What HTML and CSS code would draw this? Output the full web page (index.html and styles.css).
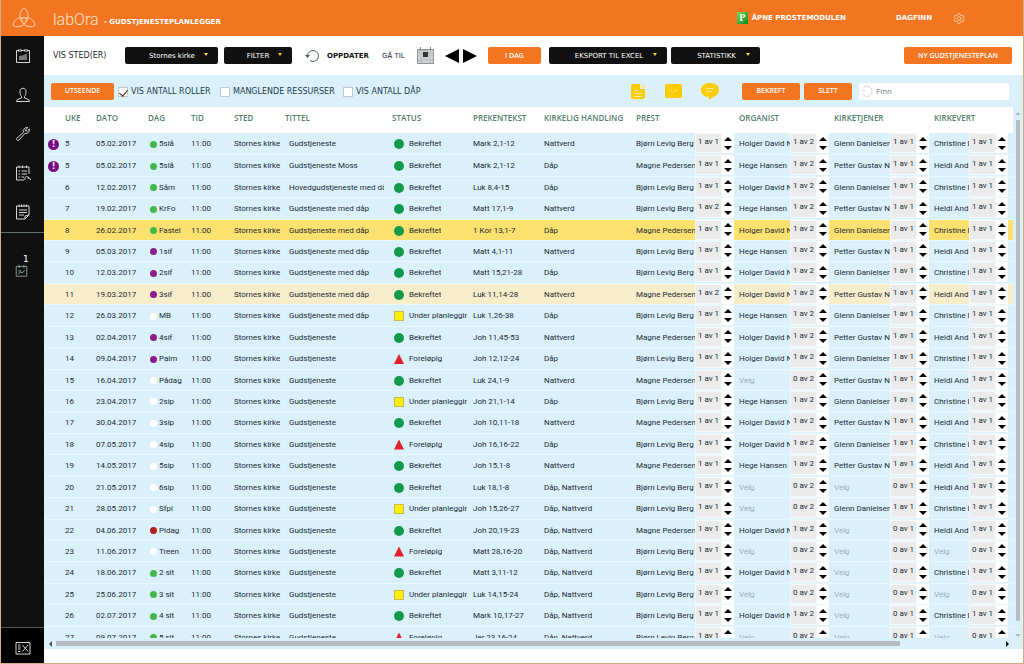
FILE: index.html
```html
<!DOCTYPE html>
<html lang="no">
<head>
<meta charset="utf-8">
<title>labOra - Gudstjenesteplanlegger</title>
<link rel="stylesheet" href="styles.css">
</head>
<body>
<div class="app">
  <header class="topbar">
    <svg class="logo" viewBox="0 0 24 24" aria-hidden="true"><path d="M12 2C6.500 6 6.500 14 12 18C17.500 14 17.500 6 12 2ZM1 19.500C1.500 13 8 9.500 14.500 12.500C14 19 7.500 23 1 19.500ZM23 19.500C22.500 13 16 9.500 9.500 12.500C10 19 16.500 23 23 19.500Z"/></svg>
    <span class="brand">labOra</span>
    <h1 class="module">- GUDSTJENESTEPLANLEGGER</h1>
    <a class="top-link prost" href="#"><span class="p-badge">P</span>ÅPNE PROSTEMODULEN</a>
    <a class="top-link user" href="#">DAGFINN</a>
    <button class="icon-btn gear" aria-label="Innstillinger"><svg width="10" height="11" viewBox="0 0 22 24"><path d="M9 1h4l1 4 3 1 3-1 2 4-3 3 3 3-2 4-3-1-3 1-1 4H9l-1-4-3-1-3 1-2-4 3-3-3-3 2-4 3 1 3-1z"/><circle cx="11" cy="12" r="4"/></svg></button>
  </header>
  <div class="body">
    <nav class="sidebar">
      <button class="side-btn" aria-label="Kalender"><svg viewBox="0 0 16 16"><path d="M4 2.500H1.500V14.500H14.500V2.500H12M6 2.500H10M4 1V4M6 1V4M10 1V4M12 1V4"/><path class="fill" d="M4 12V8L7 7.500 12 5.500V12Z"/></svg></button>
      <button class="side-btn" aria-label="Personer"><svg viewBox="0 0 16 16"><path d="M5 5C4.500 0 11.500 0 11 5C11 7 10.500 8.500 9.500 9.500V11L13 12.300Q14.500 13 14.500 14.500H1.500Q1.500 13 3 12.300L6.500 11V9.500C5.500 8.500 5 7 5 5Z"/></svg></button>
      <button class="side-btn" aria-label="Verktøy"><svg viewBox="0 0 16 16"><path d="M13 1.500C10.500.800 8 3 8.800 6L2 12C.800 13.500 2.500 15.500 4 14L10 7.300C13 8 15 5.500 14.400 3L12.300 5 10.800 4.800 10.700 3.500Z"/></svg></button>
      <button class="side-btn" aria-label="Oppgaver"><svg viewBox="0 0 16 16"><path d="M9 15H1.500V2H14V9M4 .500V3M7.500 .500V3M11.500 .500V3M3.500 6H5M6.500 6H12M3.500 9H5M6.500 9H12M3.500 12H5M6.500 12H9M10 15C9 11 13 10 13.500 14M13 11.500L16 15"/></svg></button>
      <button class="side-btn" aria-label="Notater"><svg viewBox="0 0 16 16"><path d="M10 15H1.500V2H14V11L10 15V12L14 11M4 .500V3M6.500 .500V3M9 .500V3M11.500 .500V3M4 6H12M4 8.500H12M4 11H9"/></svg></button>
      <div class="side-rule"></div>
      <button class="side-btn plan" aria-label="Planer"><span class="count">1</span><svg viewBox="0 0 16 16"><path d="M1.500 3H14.500V15H1.500ZM5 1V5M11 1V5M4 12L7 10 9 11 12 7.500M4 8.500H8"/></svg></button>
      <div class="side-foot"><button class="side-btn" aria-label="Skjul meny"><svg viewBox="0 0 16 16"><path d="M1 2.500H15V14H1ZM3 5H5.500M3 7H5.500M3 9H5.500M3 11.500H5.500M7.500 5L13 11.500M13 5L7.500 11.500"/></svg></button></div>
    </nav>
    <main class="main">
      <div class="toolbar">
        <label class="caption place" for="place">VIS STED(ER)</label>
        <span class="pick"><select id="place"><option>Stornes kirke</option></select><i class="caret"></i></span>
        <button class="btn dark filter">FILTER<i class="caret"></i></button>
        <button class="refresh"><svg width="15" height="14" viewBox="0 0 15 14"><path d="M2.500 7A5.500 5.500 0 1 1 5 11.600" /><path class="head" d="M0 6H5L2.500 9Z"/></svg>OPPDATER</button>
        <span class="caption goto">GÅ TIL</span>
        <button class="icon-btn date" aria-label="Velg dato"><svg width="17" height="17" viewBox="0 0 17 17"><rect x=".5" y="2.500" width="16" height="14" fill="#ccd0d0" stroke="#909696"/><path d="M1 6H16M1 13H16M4 6V16M13 6V16" stroke="#b8bcbc"/><rect x="6" y="5" width="5" height="5" fill="#333"/><path d="M3.500 0V4M7 2V4M10 2V4M13.500 0V4" stroke="#888"/></svg></button>
        <button class="icon-btn" aria-label="Forrige"><svg width="14" height="14" viewBox="0 0 14 14"><path d="M14 0V14L0 7Z"/></svg></button>
        <button class="icon-btn next" aria-label="Neste"><svg width="14" height="14" viewBox="0 0 14 14"><path d="M0 0V14L14 7Z"/></svg></button>
        <button class="btn orange today">I DAG</button>
        <button class="btn dark excel">EKSPORT TIL EXCEL<i class="caret"></i></button>
        <button class="btn dark stats">STATISTIKK<i class="caret"></i></button>
        <button class="btn orange new">NY GUDSTJENESTEPLAN</button>
      </div>
      <div class="toolbar sub">
        <button class="btn orange look">UTSEENDE</button>
        <label class="check roles"><input type="checkbox" checked>VIS ANTALL ROLLER</label>
        <label class="check missing"><input type="checkbox">MANGLENDE RESSURSER</label>
        <label class="check"><input type="checkbox">VIS ANTALL DÅP</label>
        <div class="actions">
          <button class="icon-btn" aria-label="Dokument"><svg width="15" height="17" viewBox="0 0 15 17"><path fill="#fc0" d="M2 1H9V6H14V14Q14 16 12 16H2Q0 16 0 14V3Q0 1 2 1Z"/><path fill="#ffe884" d="M10.500 0L15 5H10.500Z"/><path stroke="#fff0a8" d="M3 7.500H7M3 10.500H11M3 13.500H11"/></svg></button>
          <button class="icon-btn" aria-label="E-post"><svg width="17" height="14" viewBox="0 0 17 14"><rect width="17" height="14" rx="2" fill="#fc0"/><path d="M4 5L8.500 8.500 13 5" fill="none" stroke="#ffe58a"/></svg></button>
          <button class="icon-btn" aria-label="Melding"><svg width="18" height="18" viewBox="0 0 18 18"><path fill="#fc0" d="M9 1C14 1 18 3 18 8C18 11 16 13 14 14L8 18V15C3 15 0 12 0 8C0 3 4 1 9 1Z"/><path stroke="#ffea9d" d="M5 6.500H13M5 9.500H11"/></svg></button>
        </div>
        <button class="btn orange confirm">BEKREFT</button>
        <button class="btn orange delete">SLETT</button>
        <label class="search"><svg width="12" height="12" viewBox="0 0 12 12"><path d="M2 3.500A5 5 0 1 1 1.500 8.500M1 5.500H4"/></svg><input type="text" placeholder="Finn" aria-label="Finn"></label>
      </div>
      <div class="grid-area">
        <div class="grid-view">
          <table class="plan-table">
            <colgroup><col class="c-alert"><col class="c-week"><col class="c-date"><col class="c-day"><col class="c-time"><col class="c-place"><col class="c-title"><col class="c-status"><col class="c-text"><col class="c-act"><col class="c-priest"><col class="c-org"><col class="c-serv"><col></colgroup>
            <thead><tr><th></th><th>UKE</th><th>DATO</th><th>DAG</th><th>TID</th><th>STED</th><th>TITTEL</th><th>STATUS</th><th>PREKENTEKST</th><th>KIRKELIG HANDLING</th><th>PREST</th><th>ORGANIST</th><th>KIRKETJENER</th><th>KIRKEVERT</th></tr></thead>
            <tbody id="rows"></tbody>
          </table>
        </div>
        <div class="vscroll"><i class="arrow up"></i><div class="vthumb"></div><i class="arrow down"></i></div>
        <div class="hscroll"><i class="arrow left"></i><div class="htrack"><div class="hthumb"></div></div><i class="arrow right"></i></div>
      </div>
    </main>
  </div>
</div>
<script src="app.js"></script>
</body>
</html>
```
FILE: app.js
```js
// week | date | colour | day | title | status | text | act | priest | priest count | organist | servant | host
const plans = `5|05.02.2017|g|5slå||B|Mark 2,1-12|N|B|1|D|G|C
5|05.02.2017|g|5slå|Gudstjeneste Moss|B|Mark 2,1-12|D|M|1|H|P|A
6|12.02.2017|g|Såm|Hovedgudstjeneste med då|B|Luk 8,4-15|D|B|1|D|G|C
7|19.02.2017|g|KrFo|Gudstjeneste med dåp|B|Matt 17,1-9|N|B|2|H|P|A
8|26.02.2017|g|Fastel|Gudstjeneste med dåp|B|1 Kor 13,1-7|D|M|1|D|G|C
9|05.03.2017|p|1sif|Gudstjeneste med dåp|B|Matt 4,1-11|N|B|1|H|P|A
10|12.03.2017|p|2sif|Gudstjeneste med dåp|B|Matt 15,21-28|D|B|1|D|G|C
11|19.03.2017|p|3sif|Gudstjeneste med dåp|B|Luk 11,14-28|N|M|2|D|P|A
12|26.03.2017|w|MB|Gudstjeneste med dåp|U|Luk 1,26-38|D|B|1|H|G|C
13|02.04.2017|p|4sif||B|Joh 11,45-53|N|M|1|D|P|A
14|09.04.2017|p|Palm||F|Joh 12,12-24|D|B|1|D|G|C
15|16.04.2017|w|Pådag||B|Luk 24,1-9|N|M|1||P|A
16|23.04.2017|w|2sip||U|Joh 21,1-14|D|B|1|H|G|C
17|30.04.2017|w|3sip||B|Joh 10,11-18|N|M|1|D|P|A
18|07.05.2017|w|4sip||F|Joh 16,16-22|D|B|1|D|G|C
19|14.05.2017|w|5sip||B|Joh 15,1-8|N|M|1|H|P|A
20|21.05.2017|w|6sip||B|Luk 18,1-8|X|B|1|||A
21|28.05.2017|w|Sfpi||U|Joh 15,26-27|X|B|1||G|C
22|04.06.2017|r|Pidag||B|Joh 20,19-23|X|M|1|D||A
23|11.06.2017|w|Treen||F|Matt 28,16-20|X|B|1|||
24|18.06.2017|g|2 sit||B|Matt 3,11-12|X|B|1|D||C
25|25.06.2017|g|3 sit||U|Luk 14,15-24|X|B|1|||
26|02.07.2017|g|4 sit||B|Mark 10,17-27|X|B|1|D||C
27|09.07.2017|g|5 sit||F|Jer 23,16-24|X|B|1|||`;
const names = { B: "Bjørn Levig Berg", M: "Magne Pedersen", D: "Holger David N", H: "Hege Hansen", G: "Glenn Danielsen", P: "Petter Gustav Ni", C: "Christine L", A: "Heidi And" };
const status = { B: ["ok", "Bekreftet"], U: ["planned", "Under planleggir"], F: ["draft", "Foreløpig"] };
const acts = { N: "Nattverd", D: "Dåp", X: "Dåp, Nattverd" };

const role = (key, total) => `<td class="role"><div class="role-box"><span class="name${key ? "" : " empty"}">${names[key] || "Velg"}</span><span class="amount">${key ? 1 : 0} av ${total}</span><span class="spin"><button aria-label="Opp"></button><button class="less" aria-label="Ned"></button></span></div></td>`;

document.getElementById("rows").innerHTML = plans.split("\n").map((line, i) => {
  const [week, date, color, day, title, st, text, act, priest, pTotal, org, serv, host] = line.split("|");
  const cls = week === "8" ? "selected" : week === "11" ? "hover" : "";
  const tip = i < 2 ? '<span class="alert">!</span>' : "";
  return `<tr class="${cls}"><td>${tip}</td><td>${week}</td><td>${date}</td><td><span class="day"><i class="dot ${color}"></i>${day}</span></td><td>11:00</td><td>Stornes kirke</td><td class="title"><div>${title || "Gudstjeneste"}</div></td><td><span class="status"><i class="${status[st][0]}"></i><span>${status[st][1]}</span></span></td><td>${text}</td><td>${acts[act]}</td>${role(priest, pTotal)}${role(org, 2)}${role(serv, 1)}${role(host, 1)}</tr>`;
}).join("");
```
FILE: styles.css
```css
* { box-sizing: border-box; }
body { margin: 0; font: 8px/12px "Open Sans", "Noto Sans", sans-serif; color: #1b2a34; background: #fff; }
button { font: inherit; color: inherit; border: 0; padding: 0; background: none; }
svg { display: block; }
.app { height: 100vh; display: flex; flex-direction: column; border: 1px solid #cfae86; border-top: 0; overflow: hidden; }
.icon-btn { flex: none; display: flex; }

.topbar { flex: none; height: 36px; display: flex; align-items: center; background: #f37521; color: #fff; padding-right: 60px; margin: 0 -1px; font: bold 7px/12px "DejaVu Sans", sans-serif; }
.logo { width: 24px; height: 24px; margin-left: 12px; fill: none; stroke: #fbd0a5; stroke-width: 1; }
.brand { margin-left: 17px; width: 46px; font: 300 16px/20px Roboto, sans-serif; color: #ffe6d2; padding-top: 4px; }
.module { margin: 0 auto 0 5px; font: inherit; padding-top: 8px; }
.top-link { color: #fff; text-decoration: none; display: flex; align-items: center; }
.p-badge { width: 11px; height: 12px; margin-right: 4px; background: linear-gradient(135deg, #79d855, #078b25); font: bold 10px/12px "Liberation Serif", serif; text-align: center; }
.user { margin-left: 50px; }
.gear { margin-left: 22px; }
.gear svg { fill: none; stroke: #fbd0a5; stroke-width: 2; overflow: visible; }

.body { flex: 1; min-height: 0; display: flex; }
.sidebar { flex: none; width: 43px; background: #101010; display: flex; flex-direction: column; }
.side-btn { height: 39px; display: flex; align-items: center; justify-content: center; flex: none; }
.side-btn svg { width: 16px; height: 16px; fill: none; stroke: #d5d5d5; stroke-width: 1; overflow: visible; }
.side-btn .fill { fill: #777; stroke: none; }
.side-rule { height: 1px; margin-top: 1px; background: #62736d; }
.plan { position: relative; margin-top: 18px; }
.plan svg { width: 13px; height: 13px; stroke: #9ab5a9; margin-right: 2px; }
.count { position: absolute; left: 22px; top: 2px; color: #fff; font: 9px/12px "DejaVu Sans", sans-serif; }
.side-foot { margin-top: auto; height: 36px; background: #000; border-top: 1px solid #555; display: flex; justify-content: center; }
.main { flex: 1; min-width: 0; display: flex; flex-direction: column; }

.toolbar { flex: none; height: 39px; display: flex; align-items: center; padding: 0 11px 0 9px; font: 7px/12px "DejaVu Sans", sans-serif; }
.caption { white-space: nowrap; }
.place { flex: none; width: 72px; font-size: 8px; }
.pick { position: relative; width: 93px; }
.pick select { appearance: none; display: block; width: 100%; height: 17px; border: 0; border-radius: 2px; background: #111; color: #fff; font: 7px/12px "DejaVu Sans", sans-serif; padding: 0 0 0 24px; }
.btn { position: relative; flex: none; height: 17px; border-radius: 2px; color: #fff; white-space: nowrap; }
.dark { background: #111; }
.orange { background: #f37521; font-family: "Open Sans", "Noto Sans", sans-serif; font-weight: 600; }
.caret { position: absolute; right: 10px; top: 6px; border: 2px solid transparent; border-top: 3px solid #f6d52c; }
.filter { width: 68px; margin-left: 6px; }
.refresh { width: 76px; margin-left: 13px; display: flex; align-items: center; gap: 7px; font-weight: bold; color: #111; }
.refresh svg { fill: none; stroke: #4d5a61; stroke-width: 1; }
.refresh .head { fill: #4d5a61; stroke: none; }
.goto { width: 35px; margin-left: 1px; }
.date { margin-right: 11px; }
.next { margin-left: 4px; }
.today { width: 53px; margin-left: 11px; }
.excel { width: 118px; margin-left: 8px; padding-left: 2px; }
.stats { width: 89px; margin-left: 4px; padding-left: 2px; }
.new { width: 108px; margin-left: auto; }

.sub { height: 32px; background: #daf1fc; padding: 0 14px 0 7px; }
.look { width: 63px; }
.check { display: flex; align-items: center; gap: 3px; white-space: nowrap; margin-left: 4px; font-size: 8px; line-height: 14px; color: #243c4b; padding-top: 2px; }
.check input { appearance: none; flex: none; margin: 0; width: 10px; height: 10px; background: #fff; border: 1px solid #bfc9ce; }
.check input:checked::after { content: ""; display: block; width: 4px; height: 7px; margin-left: 2px; border: solid #4a1717; border-width: 0 1px 1px 0; transform: rotate(40deg); }
.roles { width: 98px; }
.missing { width: 119px; }
.actions { margin-left: auto; margin-right: 23px; display: flex; align-items: center; gap: 19px; }
.confirm { width: 58px; }
.delete { width: 48px; margin-left: 4px; }
.search { width: 150px; height: 17px; margin-left: 7px; padding-left: 2px; background: #fff; border-radius: 2px; display: flex; align-items: center; gap: 3px; }
.search svg { flex: none; fill: none; stroke: #dad2cf; }
.search input { flex: 1; min-width: 0; border: 0; padding: 0; background: none; outline: 0; font: 8px/12px "Open Sans", sans-serif; }
.search input::placeholder { color: #777; }

.grid-area { flex: 1; min-height: 0; margin-bottom: 14px; display: grid; grid-template: minmax(0, 1fr) 11px / minmax(0, 1fr) 10px; background: #daf1fc; }
.grid-view { overflow: hidden; }
.plan-table { width: 100%; table-layout: fixed; border-collapse: collapse; font: 8px/12px Roboto, sans-serif; }
.c-alert { width: 21px; }
.c-week { width: 31px; }
.c-date { width: 52px; }
.c-day { width: 43px; }
.c-time { width: 43px; }
.c-place { width: 51px; }
.c-title { width: 107px; }
.c-status { width: 81px; }
.c-text { width: 71px; }
.c-act { width: 92px; }
.c-priest { width: 103px; }
.c-org { width: 95px; }
.c-serv { width: 100px; }
th { height: 26px; padding: 0 0 4px; background: #fff; color: #56806f; text-align: left; font: 600 8px/12px "Open Sans", sans-serif; white-space: nowrap; }
td { padding: 2px 0 0; white-space: nowrap; border-bottom: 1px solid #e9f7fd; }
tbody tr { height: 21px; }
tbody tr:nth-child(7n+2), tbody tr:nth-child(7n+4), tbody tr:nth-child(7n) { height: 22px; }
.selected { background: #fbe16f; }
.hover { background: #f8edcb; }
.alert { display: block; width: 11px; height: 11px; margin-left: 4px; border-radius: 50%; background: #7a0b83; color: #fff; font: bold 8px/11px "DejaVu Sans", sans-serif; text-align: center; }
.day { display: flex; align-items: center; margin-left: 2px; gap: 2px; }
.dot { width: 7px; height: 7px; border-radius: 50%; background: #fff; }
.g { background: #45b649; }
.p { background: #8b1c8c; }
.r { background: #b32020; }
.title div { margin: 0 8px 0 4px; overflow: hidden; }
.status { display: flex; align-items: center; gap: 5px; padding-left: 2px; margin-right: 4px; overflow: hidden; }
.status span { overflow: hidden; }
.status i { flex: none; width: 10px; height: 10px; border: 1px solid transparent; background-clip: padding-box; }
.status .ok { border: 0; border-radius: 50%; background: #12994c; }
.status .planned { background: #fbee09; border-color: #c9b94a; }
.status .draft { border: 0; background: #e31e2d; clip-path: polygon(50% 0, 100% 100%, 0 100%); }
.role { padding: 0; }
.role-box { display: flex; align-items: center; margin-right: 5px; }
.name { flex: 1; min-width: 0; overflow: hidden; padding-top: 2px; }
.empty { color: #9bb0ba; }
.amount { flex: none; width: 25px; height: 18px; background: #ebebeb; line-height: 16px; text-align: center; box-shadow: 0 0 0 1px #f4f8fa; }
.spin { flex: none; width: 12px; height: 20px; margin-left: 1px; background: #fff; display: flex; flex-direction: column; align-items: center; justify-content: center; gap: 5px; }
.spin button { border: 4px solid transparent; border-top: 0; border-bottom: 4px solid #000; width: 0; height: 0; }
.spin .less { border-bottom: 0; border-top: 4px solid #000; }

.vscroll { display: flex; flex-direction: column; align-items: center; padding: 5px 0 1px; }
.vthumb { width: 4px; flex: 1; margin: 5px 0 13px; background: #b5bfc5; }
.hscroll { display: flex; align-items: center; padding: 0 4px 0 5px; }
.htrack { flex: 1; margin: 0 12px 0 4px; }
.hthumb { width: 90%; height: 5px; background: #b4bec3; }
.arrow { border: 3px solid transparent; }
.up { border-top: 0; border-bottom-color: #adb9c2; }
.down { border-bottom: 0; border-top-color: #adb9c2; }
.left { border-left: 0; border-right-color: #455; }
.right { border-right: 0; border-left-color: #111; }
```
